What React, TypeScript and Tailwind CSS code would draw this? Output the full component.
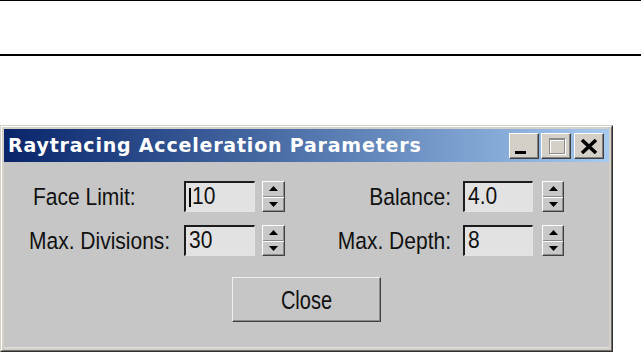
import React from "react"

const sans = "font-['Liberation_Sans',Arial,sans-serif]"

function Txt({ children, className = "" }: { children: React.ReactNode; className?: string }) {
  return <span className={`inline-block scale-y-[1.15] ${className}`}>{children}</span>
}

function Spinner({ w }: { w: string }) {
  return (
    <div
      className={`${w} flex h-[31px] flex-col border border-t-white border-l-white border-r-[#404040] border-b-[#404040] bg-[#c8c8c8] shadow-[inset_-1px_-1px_0_#8a8a8a]`}
    >
      <div className="flex flex-1 items-center justify-center border-b border-b-[#8a8a8a]">
        <svg width="9" height="5" viewBox="0 0 9 5">
          <path d="M4.5 0 L9 5 L0 5 Z" fill="#000" />
        </svg>
      </div>
      <div className="flex flex-1 items-center justify-center border-t border-t-white">
        <svg width="9" height="5" viewBox="0 0 9 5">
          <path d="M0 0 L9 0 L4.5 5 Z" fill="#000" />
        </svg>
      </div>
    </div>
  )
}

function Field({ value, w, caret }: { value: string; w: string; caret?: boolean }) {
  return (
    <div
      className={`${w} flex h-[31px] items-center border-t-2 border-l-2 border-r border-b border-t-[#1c1c1c] border-l-[#1c1c1c] border-r-[#e4e4e4] border-b-[#e4e4e4] bg-[#e2e2e2] pl-[3px] text-[21px] leading-none text-[#111]`}
    >
      {caret && <span className="mr-[1px] h-[19px] w-[2px] bg-black" />}
      <Txt className="-mt-[3px]">{value}</Txt>
    </div>
  )
}

function TitleButton({ children }: { children: React.ReactNode }) {
  return (
    <div className="relative h-[26px] w-[30px] border border-t-white border-l-white border-r-[#404040] border-b-[#404040] bg-[#d4d0c8] shadow-[inset_-1px_-1px_0_#808080]">
      {children}
    </div>
  )
}

function Row({
  left,
  leftPad,
  leftValue,
  right,
  rightValue,
  caret,
}: {
  left: string
  leftPad: string
  leftValue: string
  right: string
  rightValue: string
  caret?: boolean
}) {
  return (
    <div className="flex h-[31px] items-center">
      <div className={`w-[180px] ${leftPad} text-[21px] leading-none text-[#111]`}>
        <Txt>{left}</Txt>
      </div>
      <Field value={leftValue} w="w-[71px]" caret={caret} />
      <div className="ml-[7px]">
        <Spinner w="w-[23px]" />
      </div>
      <div className="w-[178px] pr-[12px] text-right text-[21px] leading-none text-[#111]">
        <Txt>{right}</Txt>
      </div>
      <Field value={rightValue} w="w-[70px]" />
      <div className="ml-[9px]">
        <Spinner w="w-[22px]" />
      </div>
    </div>
  )
}

export default function App() {
  return (
    <div className={`flex h-[352px] w-[641px] flex-col overflow-hidden bg-white ${sans}`}>
      <div className="h-px bg-black" />
      <div className="mt-[53px] h-[2px] bg-black" />

      {/* Dialog window */}
      <div className="mt-[69px] h-[227px] w-[613px] shrink-0 border border-t-[#d4d0c8] border-l-[#d4d0c8] border-r-[#303030] border-b-[#303030]">
        <div className="flex h-full flex-col border border-t-white border-l-white border-r-[#707070] border-b-[#707070] bg-[#d4d0c8] p-[2px]">
          {/* Title bar */}
          <div className="flex h-[33px] shrink-0 items-center bg-gradient-to-r from-[#0a246a] to-[#a6caf0] pr-[5px] pl-[4px]">
            <span className="font-['DejaVu_Sans',Verdana,sans-serif] text-[19px] font-bold tracking-[0.8px] text-white">
              Raytracing Acceleration Parameters
            </span>
            <div className="ml-auto flex items-center">
              <TitleButton>
                <div className="absolute top-[17px] left-[5px] h-[3px] w-[11px] bg-black" />
              </TitleButton>
              <div className="ml-[2px]">
                <TitleButton>
                  <div className="absolute top-[5px] left-[8px] h-[16px] w-[16px] border border-t-2 border-white" />
                  <div className="absolute top-[4px] left-[7px] h-[16px] w-[16px] border border-t-2 border-[#8a8a8a]" />
                </TitleButton>
              </div>
              <div className="ml-[3px]">
                <TitleButton>
                  <svg className="absolute top-[5px] left-[5px]" width="18" height="15" viewBox="0 0 18 15">
                    <path d="M2 1 L16 14 M16 1 L2 14" stroke="#000" strokeWidth="3.5" />
                  </svg>
                </TitleButton>
              </div>
            </div>
          </div>

          {/* Body */}
          <div className="flex flex-1 flex-col bg-[#c6c6c6] pt-[19px] shadow-[inset_0_-1px_0_#e0e0e0]">
            <Row left="Face Limit:" leftPad="pl-[29px]" leftValue="10" right="Balance:" rightValue="4.0" caret />
            <div className="mt-[13px]">
              <Row left="Max. Divisions:" leftPad="pl-[25px]" leftValue="30" right="Max. Depth:" rightValue="8" />
            </div>
            <div className="mt-[21px] flex justify-center">
              <button className="flex h-[45px] w-[149px] items-center justify-center border border-t-[#eeeeee] border-l-[#eeeeee] border-r-[#404040] border-b-[#404040] bg-[#c6c6c6] text-[20px] leading-none text-[#111] shadow-[inset_-1px_-1px_0_#8a8a8a]">
                <span className="inline-block scale-y-[1.25]">Close</span>
              </button>
            </div>
          </div>
        </div>
      </div>
    </div>
  )
}
